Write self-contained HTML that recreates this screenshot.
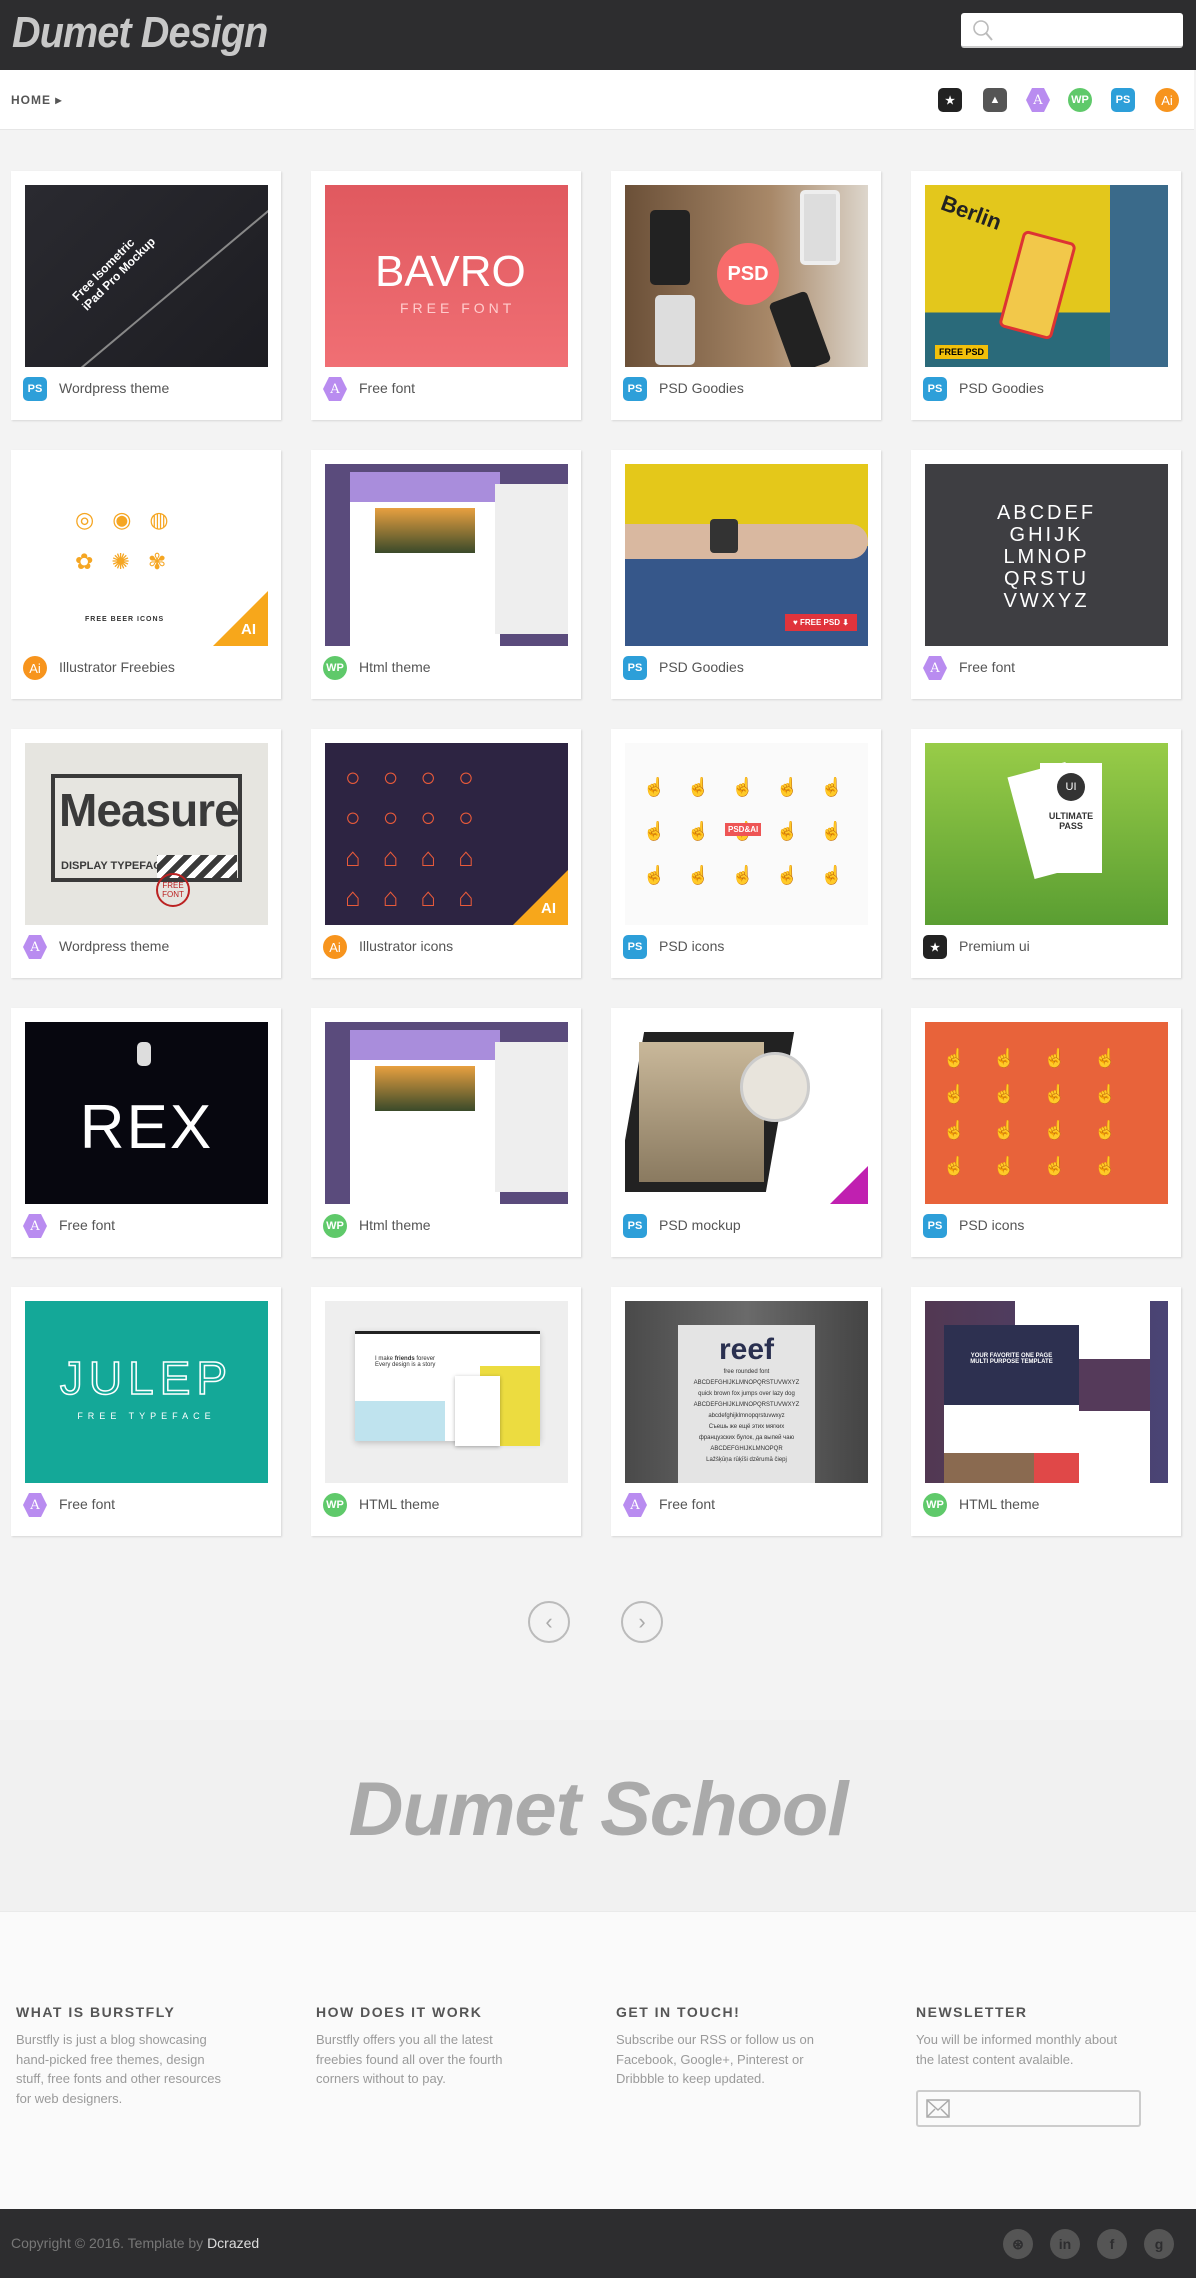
<!DOCTYPE html>
<html><head><meta charset="utf-8"><style>
*{margin:0;padding:0;box-sizing:border-box}
body{width:1196px;height:2278px;background:#f3f3f3;font-family:"Liberation Sans",sans-serif;position:relative;overflow:hidden}
.hdr{position:absolute;left:0;top:0;width:1196px;height:70px;background:#2d2d2f}
.logo{position:absolute;left:12px;top:8px;font:italic bold 44px "Liberation Sans Narrow","Liberation Sans",sans-serif;color:#c8c8c8;letter-spacing:-1px;transform:scaleX(.9);transform-origin:left}
.search{position:absolute;left:961px;top:13px;width:222px;height:35px;background:#fff;border-radius:3px;border-bottom:2px solid #ccc}
.nav{position:absolute;left:0;top:70px;width:1194px;height:60px;background:#fff;border-bottom:1px solid #e6e6e6}
.home{position:absolute;left:11px;top:93px;font-size:12px;font-weight:bold;color:#555;letter-spacing:1px}
.ic{position:absolute;width:24px;height:24px;color:#fff;font-size:11px;font-weight:bold;display:flex;align-items:center;justify-content:center}
.ps{background:#2d9fd9;border-radius:5px}
.aa{background:#b98cf0;clip-path:polygon(25% 0,75% 0,100% 50%,75% 100%,25% 100%,0 50%);font-family:"DejaVu Serif",serif;font-weight:normal;font-size:13px}
.wp{background:#5fc96a;border-radius:50%}
.ai{background:#f7941d;border-radius:50%;font-weight:normal;font-size:13px}
.st{background:#222;border-radius:5px}
.im{background:#555;border-radius:5px}
.card{position:absolute;width:270px;height:249px;background:#fff;box-shadow:1px 1px 2px rgba(0,0,0,.12)}
.pic{position:absolute;left:14px;top:14px;width:243px;height:182px;overflow:hidden}
.card .ic{left:12px;top:206px}
.lbl{position:absolute;left:48px;top:209px;font-size:14px;color:#555}
.tri{position:absolute;right:0;bottom:0;width:0;height:0;border-left:55px solid transparent;border-bottom:55px solid #f7a71b}
.tri span{position:absolute;left:-27px;top:30px;color:#fff;font-weight:bold;font-size:15px}
.arrow{position:absolute;top:1601px;width:42px;height:42px;border:2px solid #bbb;border-radius:50%;color:#aaa;font-size:22px;text-align:center;line-height:38px}
.school{position:absolute;left:0;top:1720px;width:1196px;height:191px;background:#f1f1f1}
.school div{position:absolute;left:0;width:1196px;top:46px;text-align:center;font:italic bold 76px "Liberation Sans Narrow","Liberation Sans",sans-serif;color:#aaa;letter-spacing:-1px}
.fw{position:absolute;left:0;top:1911px;width:1196px;height:298px;background:#fafafa;border-top:1px solid #eaeaea}
.col{position:absolute;top:92px;width:215px}
.col h4{font-size:14px;color:#555;letter-spacing:1.5px;margin-bottom:10px}
.col p{font-size:13px;line-height:19.5px;color:#9a9a9a}
.mail{position:absolute;left:916px;top:2090px;width:225px;height:37px;border:2px solid #ccc;border-radius:3px;background:#fafafa}
.bot{position:absolute;left:0;top:2209px;width:1196px;height:69px;background:#2d2d2f}
.copy{position:absolute;left:11px;top:26px;font-size:14px;color:#777}
.copy b{color:#ddd;font-weight:normal}
.soc{position:absolute;top:20px;width:30px;height:30px;border-radius:50%;background:#555;color:#2d2d2f;font-weight:bold;font-size:14px;text-align:center;line-height:30px}
</style></head><body>
<div class="hdr"><div class="logo">Dumet Design</div>
<div class="search"><svg width="24" height="26" style="position:absolute;left:10px;top:5px" viewBox="0 0 24 26"><circle cx="10" cy="10" r="7" fill="none" stroke="#bbb" stroke-width="1.6"/><path d="M15 15l6 7" stroke="#bbb" stroke-width="2"/></svg></div></div>
<div class="nav"></div>
<div class="home">HOME ▸</div>
<div class="ic st" style="left:938px;top:88px">★</div>
<div class="ic im" style="left:983px;top:88px">▲</div>
<div class="ic aa" style="left:1026px;top:88px">A</div>
<div class="ic wp" style="left:1068px;top:88px">WP</div>
<div class="ic ps" style="left:1111px;top:88px">PS</div>
<div class="ic ai" style="left:1155px;top:88px">Ai</div>

<!-- row1 -->
<div class="card" style="left:11px;top:171px"><div class="pic" style="background:linear-gradient(135deg,#2a2a30,#1d1d22)"><div style="position:absolute;left:40px;top:70px;color:#fff;font-size:12px;font-weight:bold;transform:rotate(-45deg)">Free Isometric<br>iPad Pro Mockup</div><div style="position:absolute;left:-30px;top:120px;width:320px;height:2px;background:#888;transform:rotate(-40deg)"></div></div><div class="ic ps">PS</div><div class="lbl">Wordpress theme</div></div>
<div class="card" style="left:311px;top:171px"><div class="pic" style="background:linear-gradient(#e0595f,#f06f74)"><div style="position:absolute;left:50px;top:62px;color:#fff;font-size:44px;font-weight:300">BAVRO</div><div style="position:absolute;left:75px;top:115px;color:#fcc;font-size:14px;letter-spacing:4px">FREE FONT</div></div><div class="ic aa">A</div><div class="lbl">Free font</div></div>
<div class="card" style="left:611px;top:171px"><div class="pic" style="background:linear-gradient(90deg,#6b5038,#a88868 60%,#ddd6cc)"><div style="position:absolute;left:25px;top:25px;width:40px;height:75px;background:#222;border-radius:5px"></div><div style="position:absolute;left:175px;top:5px;width:40px;height:75px;background:#ddd;border-radius:5px;border:4px solid #eee"></div><div style="position:absolute;left:30px;top:110px;width:40px;height:70px;background:#ddd;border-radius:5px"></div><div style="position:absolute;left:155px;top:110px;width:40px;height:75px;background:#222;border-radius:5px;transform:rotate(-20deg)"></div><div style="position:absolute;left:92px;top:58px;width:62px;height:62px;border-radius:50%;background:#f86b6b;color:#fff;font-weight:bold;font-size:20px;line-height:62px;text-align:center">PSD</div></div><div class="ic ps">PS</div><div class="lbl">PSD Goodies</div></div>
<div class="card" style="left:911px;top:171px"><div class="pic" style="background:linear-gradient(#e3c71c 0,#e3c71c 70%,#2a6a7a 70%)"><div style="position:absolute;left:15px;top:15px;color:#222;font-weight:bold;font-size:22px;transform:rotate(20deg)">Berlin</div><div style="position:absolute;left:85px;top:50px;width:55px;height:100px;background:#f2c84a;border:3px solid #d33;border-radius:6px;transform:rotate(15deg)"></div><div style="position:absolute;left:185px;top:0;width:58px;height:182px;background:#3a6a8a"></div><div style="position:absolute;left:10px;top:160px;background:#f2c00a;font-size:9px;font-weight:bold;padding:2px 4px">FREE PSD</div></div><div class="ic ps">PS</div><div class="lbl">PSD Goodies</div></div>
<!-- row2 -->
<div class="card" style="left:11px;top:450px"><div class="pic" style="background:#fff"><div style="position:absolute;left:50px;top:35px;font-size:22px;color:#f5a623;letter-spacing:18px;line-height:42px">◎◉◍<br>✿✺✾</div><div style="position:absolute;left:60px;top:152px;font-size:7px;font-weight:bold;color:#333;letter-spacing:1px">FREE BEER ICONS</div><div class="tri"><span>AI</span></div></div><div class="ic ai">Ai</div><div class="lbl">Illustrator Freebies</div></div>
<div class="card" style="left:311px;top:450px"><div class="pic" style="background:#5a4b7c"><div style="position:absolute;left:25px;top:8px;width:150px;height:174px;background:#fff"><div style="height:30px;background:#a98ddc"></div><div style="margin:6px 25px;height:45px;background:linear-gradient(#e8a040,#3a4a2a)"></div></div><div style="position:absolute;left:170px;top:20px;width:73px;height:150px;background:#eee"></div></div><div class="ic wp">WP</div><div class="lbl">Html theme</div></div>
<div class="card" style="left:611px;top:450px"><div class="pic" style="background:linear-gradient(#e4c81a 0,#e4c81a 45%,#36578a 45%)"><div style="position:absolute;left:0;top:60px;width:243px;height:35px;background:#d9b8a0;border-radius:0 20px 20px 0"></div><div style="position:absolute;left:85px;top:55px;width:28px;height:34px;background:#333;border-radius:4px"></div><div style="position:absolute;left:160px;top:150px;background:#e0343c;color:#fff;font-size:8px;font-weight:bold;padding:4px 8px">♥ FREE PSD ⬇</div></div><div class="ic ps">PS</div><div class="lbl">PSD Goodies</div></div>
<div class="card" style="left:911px;top:450px"><div class="pic" style="background:#3e3e42"><div style="position:absolute;left:0;width:243px;top:38px;text-align:center;color:#fff;font-size:20px;letter-spacing:3px;line-height:22px;font-weight:300">ABCDEF<br>GHIJK<br>LMNOP<br>QRSTU<br>VWXYZ</div></div><div class="ic aa">A</div><div class="lbl">Free font</div></div>
<!-- row3 -->
<div class="card" style="left:11px;top:729px"><div class="pic" style="background:#e6e5e0"><div style="position:absolute;left:26px;top:31px;width:191px;height:108px;border:4px solid #3a3a3a"></div><div style="position:absolute;left:34px;top:40px;font-size:46px;color:#3a3a3a;font-weight:bold;letter-spacing:-1px">Measure</div><div style="position:absolute;left:36px;top:117px;font-size:11px;color:#3a3a3a;font-weight:bold">DISPLAY TYPEFACE</div><div style="position:absolute;left:132px;top:112px;width:80px;height:23px;background:repeating-linear-gradient(-45deg,#3a3a3a 0 6px,#fff 6px 12px)"></div><div style="position:absolute;left:131px;top:130px;width:34px;height:34px;border-radius:50%;border:2px solid #b22;color:#b22;font-size:8px;text-align:center;padding-top:6px">FREE FONT</div></div><div class="ic aa">A</div><div class="lbl">Wordpress theme</div></div>
<div class="card" style="left:311px;top:729px"><div class="pic" style="background:#2d2442"><div style="position:absolute;left:20px;top:14px;color:#e85a3a;font-size:26px;letter-spacing:22px;line-height:40px">○○○○<br>○○○○<br>⌂⌂⌂⌂<br>⌂⌂⌂⌂</div><div class="tri"><span>AI</span></div></div><div class="ic ai">Ai</div><div class="lbl">Illustrator icons</div></div>
<div class="card" style="left:611px;top:729px"><div class="pic" style="background:#fafafa"><div style="position:absolute;left:18px;top:22px;color:#e55;font-size:18px;letter-spacing:22px;line-height:44px;white-space:nowrap">☝☝☝☝☝<br>☝☝☝☝☝<br>☝☝☝☝☝</div><div style="position:absolute;left:100px;top:80px;background:#e55;color:#fff;font-size:8px;font-weight:bold;padding:2px 3px">PSD&amp;AI</div></div><div class="ic ps">PS</div><div class="lbl">PSD icons</div></div>
<div class="card" style="left:911px;top:729px"><div class="pic" style="background:linear-gradient(#98cc48,#5a9e32)"><div style="position:absolute;left:95px;top:25px;width:60px;height:105px;background:#fff;transform:rotate(-15deg)"></div><div style="position:absolute;left:115px;top:20px;width:62px;height:110px;background:#fff"><div style="margin:10px auto;width:28px;height:28px;border-radius:50%;background:#333;color:#fff;text-align:center;line-height:28px;font-size:11px">UI</div><div style="text-align:center;font-size:9px;font-weight:bold;color:#333">ULTIMATE<br>PASS</div></div></div><div class="ic st">★</div><div class="lbl">Premium ui</div></div>
<!-- row4 -->
<div class="card" style="left:11px;top:1008px"><div class="pic" style="background:#07070f"><div style="position:absolute;left:0;width:243px;top:70px;text-align:center;color:#fff;font-size:62px;font-weight:300;letter-spacing:2px">REX</div><div style="position:absolute;left:112px;top:20px;width:14px;height:24px;background:#ddd;border-radius:5px"></div></div><div class="ic aa">A</div><div class="lbl">Free font</div></div>
<div class="card" style="left:311px;top:1008px"><div class="pic" style="background:#5a4b7c"><div style="position:absolute;left:25px;top:8px;width:150px;height:174px;background:#fff"><div style="height:30px;background:#a98ddc"></div><div style="margin:6px 25px;height:45px;background:linear-gradient(#e8a040,#3a4a2a)"></div></div><div style="position:absolute;left:170px;top:20px;width:73px;height:150px;background:#eee"></div></div><div class="ic wp">WP</div><div class="lbl">Html theme</div></div>
<div class="card" style="left:611px;top:1008px"><div class="pic" style="background:#fff"><div style="position:absolute;left:5px;top:10px;width:150px;height:160px;background:#222;transform:skewX(-10deg)"></div><div style="position:absolute;left:14px;top:20px;width:125px;height:140px;background:linear-gradient(#c9b89a,#8a7a60)"></div><div style="position:absolute;left:115px;top:30px;width:70px;height:70px;border-radius:50%;background:#e8e4dc;border:3px solid #ccc"></div><div style="position:absolute;right:0;bottom:0;border-left:38px solid transparent;border-bottom:38px solid #c020b0"></div></div><div class="ic ps">PS</div><div class="lbl">PSD mockup</div></div>
<div class="card" style="left:911px;top:1008px"><div class="pic" style="background:#e8633a"><div style="position:absolute;left:18px;top:18px;color:#fff;font-size:18px;letter-spacing:28px;line-height:36px">☝☝☝☝<br>☝☝☝☝<br>☝☝☝☝<br>☝☝☝☝</div></div><div class="ic ps">PS</div><div class="lbl">PSD icons</div></div>
<!-- row5 -->
<div class="card" style="left:11px;top:1287px"><div class="pic" style="background:#14a898"><div style="position:absolute;left:0;width:243px;top:50px;text-align:center;color:transparent;-webkit-text-stroke:1.5px #fff;font-size:46px;letter-spacing:6px">JULEP</div><div style="position:absolute;left:0;width:243px;top:110px;text-align:center;color:#fff;font-size:9px;letter-spacing:5px">FREE TYPEFACE</div></div><div class="ic aa">A</div><div class="lbl">Free font</div></div>
<div class="card" style="left:311px;top:1287px"><div class="pic" style="background:#eee"><div style="position:absolute;left:30px;top:30px;width:185px;height:110px;background:#fff;box-shadow:0 2px 6px rgba(0,0,0,.2)"><div style="height:3px;background:#222"></div><div style="position:absolute;left:20px;top:25px;font-size:6px;color:#333">I make <b>friends</b> forever<br>Every design is a story</div><div style="position:absolute;left:0;top:70px;width:90px;height:40px;background:#bfe3ee"></div></div><div style="position:absolute;left:155px;top:65px;width:60px;height:80px;background:#ecdc40"></div><div style="position:absolute;left:130px;top:75px;width:45px;height:70px;background:#fff;box-shadow:0 1px 4px rgba(0,0,0,.3)"></div></div><div class="ic wp">WP</div><div class="lbl">HTML theme</div></div>
<div class="card" style="left:611px;top:1287px"><div class="pic" style="background:linear-gradient(90deg,#4a4a4a,#6a6a6a 50%,#444)"><div style="position:absolute;left:53px;top:24px;width:137px;height:158px;background:#e4e4e4"><div style="text-align:center;font-size:30px;color:#2a3050;font-weight:bold;margin-top:8px">reef</div><div style="text-align:center;font-size:6px;color:#333;line-height:11px">free rounded font<br>ABCDEFGHIJKLMNOPQRSTUVWXYZ<br>quick brown fox jumps over lazy dog<br>ABCDEFGHIJKLMNOPQRSTUVWXYZ<br>abcdefghijklmnopqrstuvwxyz<br>Съешь же ещё этих мягких<br>французских булок, да выпей чаю<br>ABCDEFGHIJKLMNOPQR<br>Lažšķūņa rūķīši dzērumā čiepj</div></div></div><div class="ic aa">A</div><div class="lbl">Free font</div></div>
<div class="card" style="left:911px;top:1287px"><div class="pic" style="background:linear-gradient(90deg,#523852,#4a4475)"><div style="position:absolute;left:90px;top:0;width:135px;height:182px;background:#fff"></div><div style="position:absolute;left:90px;top:58px;width:135px;height:52px;background:#553a5a"></div><div style="position:absolute;left:19px;top:24px;width:135px;height:80px;background:#2d3050;color:#fff;font-size:6px;font-weight:bold;text-align:center;padding-top:28px">YOUR FAVORITE ONE PAGE<br>MULTI PURPOSE TEMPLATE</div><div style="position:absolute;left:19px;top:104px;width:135px;height:74px;background:#fff"></div><div style="position:absolute;left:19px;top:152px;width:90px;height:30px;background:#8a6a50"></div><div style="position:absolute;left:109px;top:152px;width:45px;height:30px;background:#e04848"></div></div><div class="ic wp">WP</div><div class="lbl">HTML theme</div></div>

<div class="arrow" style="left:528px">‹</div>
<div class="arrow" style="left:621px">›</div>

<div class="school"><div>Dumet School</div></div>
<div class="fw">
<div class="col" style="left:16px"><h4>WHAT IS BURSTFLY</h4><p>Burstfly is just a blog showcasing hand-picked free themes, design stuff, free fonts and other resources for web designers.</p></div>
<div class="col" style="left:316px"><h4>HOW DOES IT WORK</h4><p>Burstfly offers you all the latest freebies found all over the fourth corners without to pay.</p></div>
<div class="col" style="left:616px"><h4>GET IN TOUCH!</h4><p>Subscribe our RSS or follow us on Facebook, Google+, Pinterest or Dribbble to keep updated.</p></div>
<div class="col" style="left:916px"><h4>NEWSLETTER</h4><p>You will be informed monthly about the latest content avalaible.</p></div>
</div>
<div class="mail"><svg width="26" height="20" style="position:absolute;left:8px;top:7px" viewBox="0 0 26 20"><rect x="1" y="1" width="22" height="17" fill="none" stroke="#aaa" stroke-width="1.5"/><path d="M1 1l11 10 11-10M1 18l8-8M23 18l-8-8" fill="none" stroke="#aaa" stroke-width="1.5"/></svg></div>
<div class="bot"><div class="copy">Copyright © 2016. Template by <b>Dcrazed</b></div>
<div class="soc" style="left:1003px">⊛</div><div class="soc" style="left:1050px">in</div><div class="soc" style="left:1097px">f</div><div class="soc" style="left:1144px">g</div></div>
</body></html>
